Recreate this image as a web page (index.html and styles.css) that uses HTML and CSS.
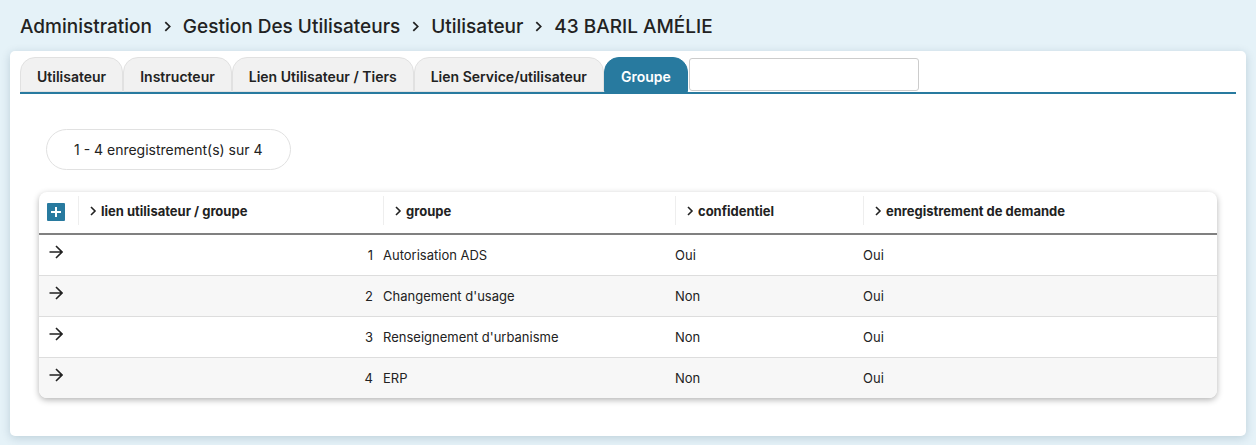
FILE: index.html
```html
<!DOCTYPE html>
<html lang="fr">
<head>
<meta charset="utf-8">
<title>Utilisateur - Groupe</title>
<link rel="stylesheet" href="styles.css">
</head>
<body>
<svg class="symbols" aria-hidden="true">
  <symbol id="chevron" viewBox="0 0 10 10"><path d="M3 1l4 4-4 4"/></symbol>
  <symbol id="arrow" viewBox="0 0 14 14"><path d="M0.5 7H13M7 1l6 6-6 6"/></symbol>
</svg>
<h1 class="breadcrumb">
  <span>Administration</span>
  <svg class="crumb-icon"><use href="#chevron"/></svg>
  <span>Gestion Des Utilisateurs</span>
  <svg class="crumb-icon"><use href="#chevron"/></svg>
  <span>Utilisateur</span>
  <svg class="crumb-icon"><use href="#chevron"/></svg>
  <span>43 BARIL AMÉLIE</span>
</h1>
<main class="panel">
  <nav class="tabs">
    <a class="tab" href="#utilisateur">Utilisateur</a>
    <a class="tab" href="#instructeur">Instructeur</a>
    <a class="tab" href="#tiers">Lien Utilisateur / Tiers</a>
    <a class="tab" href="#service">Lien Service/utilisateur</a>
    <a class="tab active" href="#groupe" aria-current="page">Groupe</a>
    <input class="search" type="text" aria-label="Recherche">
  </nav>
  <section class="content">
    <div class="pagination">1 - 4 enregistrement(s) sur 4</div>
    <table class="list">
      <colgroup><col class="col-action"><col class="col-link"><col class="col-group"><col class="col-private"><col></colgroup>
      <thead>
        <tr>
          <th><button class="add" type="button" aria-label="Ajouter"><svg viewBox="0 0 18 18"><path d="M4 9h10M9 4v10"/></svg></button></th>
          <th><div class="head"><svg class="sort-icon"><use href="#chevron"/></svg>lien utilisateur / groupe</div></th>
          <th><div class="head"><svg class="sort-icon"><use href="#chevron"/></svg>groupe</div></th>
          <th><div class="head"><svg class="sort-icon"><use href="#chevron"/></svg>confidentiel</div></th>
          <th><div class="head"><svg class="sort-icon"><use href="#chevron"/></svg>enregistrement de demande</div></th>
        </tr>
      </thead>
      <tbody>
        <tr><td><a class="open" href="#1" aria-label="Consulter 1"><svg><use href="#arrow"/></svg></a></td><td class="number">1</td><td>Autorisation ADS</td><td>Oui</td><td>Oui</td></tr>
        <tr><td><a class="open" href="#2" aria-label="Consulter 2"><svg><use href="#arrow"/></svg></a></td><td class="number">2</td><td>Changement d'usage</td><td>Non</td><td>Oui</td></tr>
        <tr><td><a class="open" href="#3" aria-label="Consulter 3"><svg><use href="#arrow"/></svg></a></td><td class="number">3</td><td>Renseignement d'urbanisme</td><td>Non</td><td>Oui</td></tr>
        <tr><td><a class="open" href="#4" aria-label="Consulter 4"><svg><use href="#arrow"/></svg></a></td><td class="number">4</td><td>ERP</td><td>Non</td><td>Oui</td></tr>
      </tbody>
    </table>
  </section>
</main>
</body>
</html>
```

FILE: styles.css
```css
* { box-sizing: border-box; }
body {
  margin: 0;
  padding: 0 10px 9px;
  background: #e5f2f8;
  color: #222;
  font-family: Inter, sans-serif;
  font-size: 13px;
}
svg { fill: none; stroke: currentColor; stroke-width: 1.6; }
.symbols { display: none; }
.breadcrumb {
  display: flex;
  align-items: center;
  gap: 10px;
  margin: 0;
  padding: 2px 10px 0;
  height: 51px;
  font-size: 19px;
  font-weight: 500;
}
.crumb-icon { width: 11px; height: 11px; }
.panel {
  padding: 6px 10px 38px;
  background: #fff;
  border-radius: 5px;
  box-shadow: 0 2px 10px rgba(0, 50, 80, 0.18);
}
.tabs {
  display: flex;
  height: 37px;
  border-bottom: 2px solid #287a9f;
}
.tab {
  padding: 10px 16px 0;
  border: 1px solid #e1e1e1;
  border-radius: 15px 15px 0 0;
  background: #f1f1f1;
  color: #222;
  font-size: 14px;
  line-height: 18px;
  font-weight: 600;
  text-decoration: none;
  white-space: nowrap;
}
.tab.active { border-color: #287a9f; background: #287a9f; color: #fff; }
.search {
  width: 230px;
  height: 33px;
  margin: 1px;
  padding: 0 8px;
  border: 1px solid #ccc;
  border-radius: 3px;
  background: #fff;
  font: inherit;
}
.content { padding: 35px 19px 0; }
.pagination {
  width: fit-content;
  margin: 0 7px 22px;
  padding: 0 27px;
  border: 1px solid #e1e1e1;
  border-radius: 21px;
  font-size: 14px;
  line-height: 39px;
}
.list {
  width: 100%;
  table-layout: fixed;
  border-collapse: separate;
  border-spacing: 0;
  border-radius: 8px;
  overflow: hidden;
  box-shadow: 0 2px 6px rgba(0, 0, 0, 0.3);
}
.col-action { width: 39px; }
.col-link { width: 305px; }
.col-group { width: 292px; }
.col-private { width: 188px; }
th {
  height: 43px;
  padding: 4px 0 0;
  border-bottom: 2px solid #808080;
  text-align: left;
  vertical-align: top;
}
.head {
  display: flex;
  align-items: center;
  gap: 3px;
  height: 29px;
  padding-left: 9px;
  border-left: 1px solid #eee;
  font-size: 13px;
  font-weight: 700;
}
.sort-icon { width: 10px; height: 10px; }
.add {
  display: block;
  width: 18px;
  height: 18px;
  margin: 7px 8px;
  padding: 0;
  border: 0;
  border-radius: 1px;
  background: #287a9f;
  color: #fff;
}
.add svg { display: block; stroke-width: 2; }
td { height: 41px; padding: 0; border-bottom: 1px solid #ddd; }
tbody tr:last-child td { height: 40px; border-bottom: 0; }
tbody tr:nth-child(even) { background: #f7f7f7; }
.number { padding-right: 10px; text-align: right; }
.open { display: block; padding: 0 10px 7px; color: #222; }
.open svg { display: block; width: 14px; height: 14px; }
```
